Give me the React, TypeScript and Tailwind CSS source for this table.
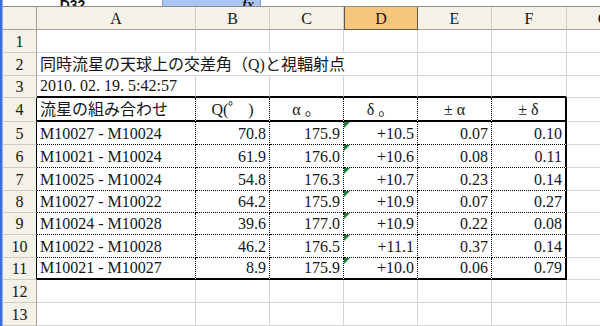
import type { FC } from "react";

const data = [
	["M10027 - M10024", "70.8", "175.9", "+10.5", "0.07", "0.10"],
	["M10021 - M10024", "61.9", "176.0", "+10.6", "0.08", "0.11"],
	["M10025 - M10024", "54.8", "176.3", "+10.7", "0.23", "0.14"],
	["M10027 - M10022", "64.2", "175.9", "+10.9", "0.07", "0.27"],
	["M10024 - M10028", "39.6", "177.0", "+10.9", "0.22", "0.08"],
	["M10022 - M10028", "46.2", "176.5", "+11.1", "0.37", "0.14"],
	["M10021 - M10027", "8.9", "175.9", "+10.0", "0.06", "0.79"],
];

const letters = ["A", "B", "C", "D", "E", "F", "G"];

const grid = "border-r border-b border-[#d5d5d5]";
const rowHead =
	"flex items-center justify-center bg-[#f4f2e8] border-r border-b border-r-[#a3a196] border-b-[#cfcdc1] pt-[1px]";
const rowHeadTable =
	"flex items-center justify-center bg-[#f4f2e8] border-r border-b border-r-black border-b-[#cfcdc1] pt-[1px]";
const tableTop = "border-r border-b-2 border-r-[#d5d5d5] border-b-black";
const thick = "border-r border-b-2 border-black [border-right-style:dotted]!";
const thickLast = "border-r-2 border-b-2 border-black";
const dotted =
	"border-r border-b border-black [border-right-style:dotted]! [border-bottom-style:dotted]!";
const dottedLast = "border-r-2 border-b border-black [border-bottom-style:dotted]!";

const text = "flex items-end pb-[2px] leading-[16px] whitespace-nowrap";

const Triangle: FC = () => (
	<span className="absolute top-0 left-0 w-0 h-0 border-t-[6px] border-r-[6px] border-t-[#1f7a35] border-r-transparent" />
);

const App: FC = () => (
	<div className="w-[600px] h-[326px] overflow-hidden flex bg-white text-[16px] text-[#161616] font-[family-name:Liberation_Serif,Noto_Sans_CJK_JP,serif]">
		{/* window edge */}
		<div className="w-[3px] shrink-0 bg-[#3d6ed6] border-r border-[#8fb0ee]" />

		<div className="flex flex-col">
			{/* formula bar, cut off at the top of the shot */}
			<div className="h-[9px] flex border-b border-[#8e8d86] overflow-hidden">
				<div className="w-[159px] flex items-end justify-center pr-[20px] font-[family-name:Liberation_Sans,sans-serif] font-bold text-[14px] leading-[14px]">
					<span className="translate-y-[6px]">D32</span>
				</div>
				<div className="w-[99px] bg-[#a8c6f1] border-x border-[#7da2dc] flex items-end justify-end pr-[6px] italic font-bold text-[14px] leading-[14px]">
					<span className="translate-y-[6px]">fx</span>
				</div>
				<div className="flex-1" />
			</div>

			<div className="grid w-max grid-cols-[34px_159px_74px_74px_74px_74px_75px_74px] grid-rows-[23px_23px_23px_22px_24px_23px_23px_23px_22px_22px_23px_22px_23px_23px]">
				{/* column headers */}
				<div className="bg-[#f4f2e8] border-r border-b border-r-[#a3a196] border-b-[#a3a196]" />
				{letters.map((l) =>
					l === "D" ? (
						<div
							key={l}
							className="flex items-center justify-center pt-[2px] bg-[#f9c77c] border-x border-b border-[#5d5a52]"
						>
							{l}
						</div>
					) : (
						<div
							key={l}
							className="flex items-center justify-center pt-[2px] bg-[#f4f2e8] border-r border-b border-r-[#cfcdc1] border-b-[#a3a196]"
						>
							{l}
						</div>
					),
				)}

				{/* row 1 */}
				<div className={rowHead}>1</div>
				{letters.map((l) => (
					<div key={l} className={grid} />
				))}

				{/* row 2 */}
				<div className={rowHead}>2</div>
				<div className={`col-span-4 pl-[3px] ${text} ${grid}`}>
					同時流星の天球上の交差角（Q)と視輻射点
				</div>
				<div className={grid} />
				<div className={grid} />
				<div className={grid} />

				{/* row 3 */}
				<div className={rowHead}>3</div>
				<div className={`pl-[3px] ${text} ${tableTop}`}>2010. 02. 19. 5:42:57</div>
				<div className={tableTop} />
				<div className={tableTop} />
				<div className={tableTop} />
				<div className={tableTop} />
				<div className={tableTop} />
				<div className={grid} />

				{/* row 4: table header */}
				<div className={rowHeadTable}>4</div>
				<div className={`pl-[3px] ${text} ${thick}`}>流星の組み合わせ</div>
				<div className={`justify-center ${text} ${thick}`}>Q(゜ )</div>
				<div className={`justify-center ${text} ${thick}`}>α 。</div>
				<div className={`justify-center ${text} ${thick}`}>δ 。</div>
				<div className={`justify-center ${text} ${thick}`}>± α</div>
				<div className={`justify-center ${text} ${thickLast}`}>± δ</div>
				<div className={grid} />

				{/* rows 5-11 */}
				{data.map((row, i) => {
					const last = i === data.length - 1;
					const inner = last ? thick : dotted;
					const edge = last ? thickLast : dottedLast;
					return [
						<div key={`h${i}`} className={rowHeadTable}>
							{i + 5}
						</div>,
						<div key={`a${i}`} className={`pl-[3px] ${text} ${inner}`}>
							{row[0]}
						</div>,
						<div key={`b${i}`} className={`justify-end pr-[3px] ${text} ${inner}`}>
							{row[1]}
						</div>,
						<div key={`c${i}`} className={`justify-end pr-[3px] ${text} ${inner}`}>
							{row[2]}
						</div>,
						<div key={`d${i}`} className={`relative justify-end pr-[3px] ${text} ${inner}`}>
							<Triangle />
							{row[3]}
						</div>,
						<div key={`e${i}`} className={`justify-end pr-[3px] ${text} ${inner}`}>
							{row[4]}
						</div>,
						<div key={`f${i}`} className={`justify-end pr-[3px] ${text} ${edge}`}>
							{row[5]}
						</div>,
						<div key={`g${i}`} className={grid} />,
					];
				})}

				{/* rows 12-13 */}
				{[12, 13].map((n) => [
					<div key={`h${n}`} className={rowHead}>
						{n}
					</div>,
					...letters.map((l) => <div key={`${l}${n}`} className={grid} />),
				])}
			</div>
		</div>
	</div>
);

export default App;
